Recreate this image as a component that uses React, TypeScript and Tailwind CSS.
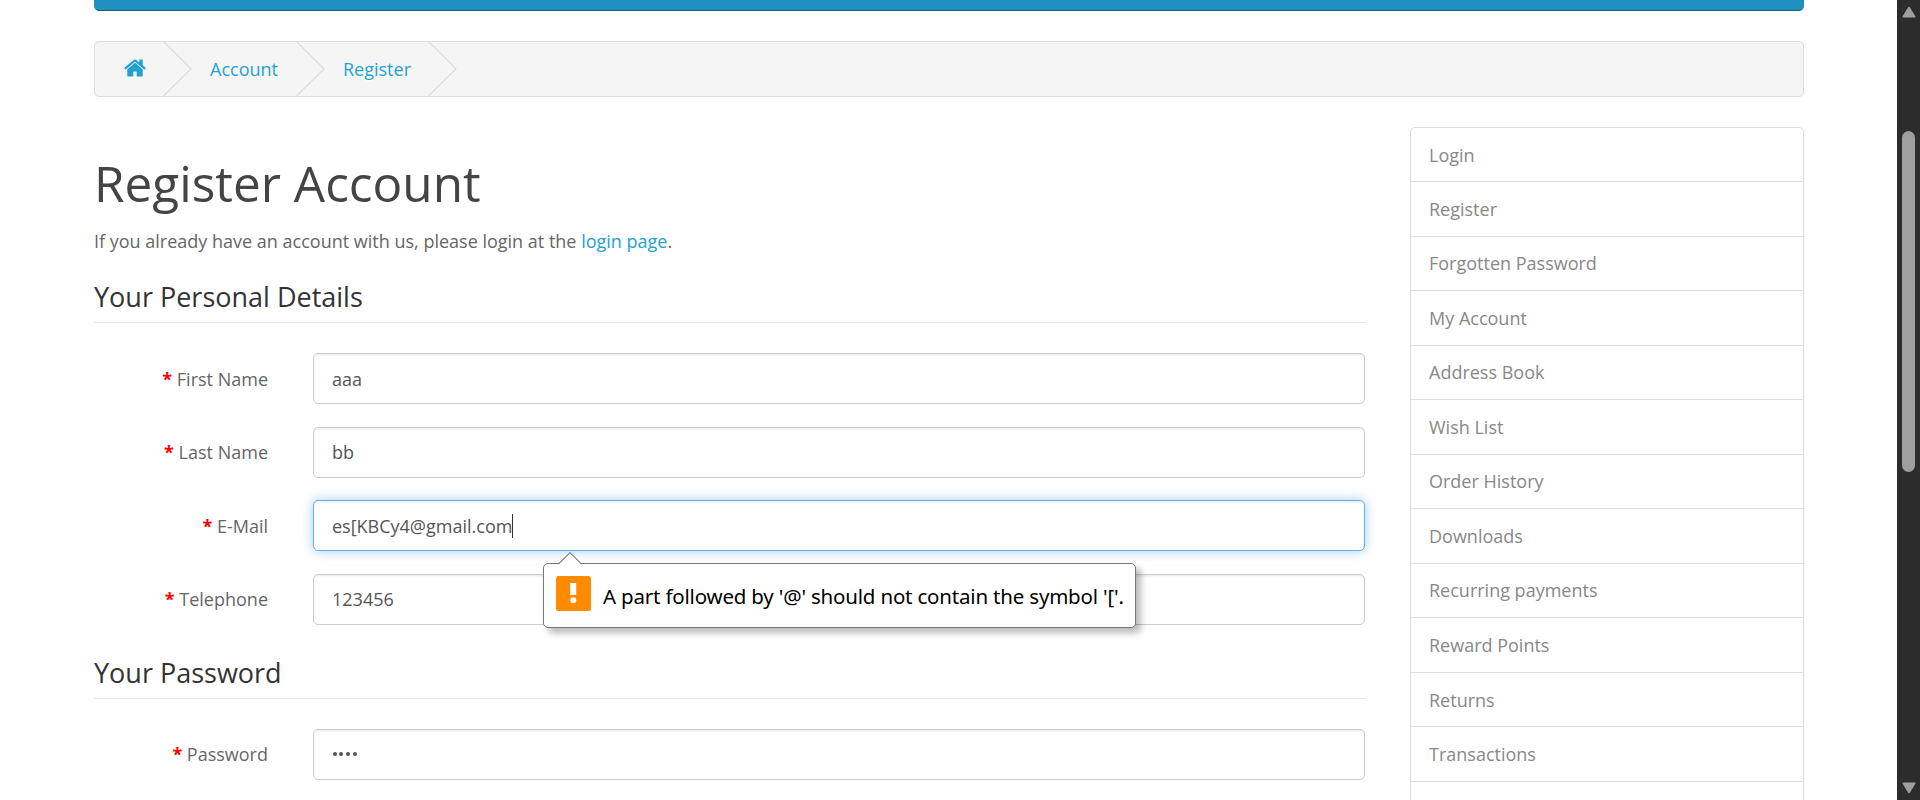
import React from "react";

const links = [
  "Login",
  "Register",
  "Forgotten Password",
  "My Account",
  "Address Book",
  "Wish List",
  "Order History",
  "Downloads",
  "Recurring payments",
  "Reward Points",
  "Returns",
  "Transactions",
];

function Chevron() {
  return (
    <svg className="block h-[56px] w-[29px] shrink-0" viewBox="0 0 29 56" fill="none" stroke="#dddddd" strokeWidth="1.3">
      <path d="M0.5 0.5L28 27.8L0.5 55" />
    </svg>
  );
}

function HomeIcon() {
  return (
    <svg className="block h-6 w-6" viewBox="0 0 1792 1792" fill="#23a1d1">
      <path d="M1472 992v480q0 26-19 45t-45 19h-384v-384h-256v384h-384q-26 0-45-19t-19-45v-480q0-1 .5-3t.5-3l575-474 575 474q1 2 1 6zm223-69l-62 74q-8 9-21 11h-3q-13 0-21-7l-692-577-692 577q-12 8-24 7-13-2-21-11l-62-74q-8-10-7-23.5t11-21.5l719-599q32-26 76-26t76 26l244 204v-195q0-14 9-23t23-9h192q14 0 23 9t9 23v408l219 182q10 8 11 21.5t-7 23.5z" />
    </svg>
  );
}

type FieldProps = {
  label: string;
  focused?: boolean;
  children: React.ReactNode;
};

function Field({ label, focused, children }: FieldProps) {
  return (
    <div className="flex h-[51px] items-center">
      <div className="w-[174px] shrink-0 text-right">
        <span className="font-bold text-[#ff0000]">* </span>
        {label}
      </div>
      <div
        className={
          focused
            ? "ml-[45px] flex h-[51px] flex-1 items-center rounded-[5px] border border-[#66afe9] bg-white px-[18px] text-[#555555] shadow-[inset_0_1.5px_1.5px_rgba(0,0,0,0.075),0_0_12px_rgba(102,175,233,0.6)]"
            : "ml-[45px] flex h-[51px] flex-1 items-center rounded-[5px] border border-[#cccccc] bg-white px-[18px] text-[#555555] shadow-[inset_0_1.5px_1.5px_rgba(0,0,0,0.075)]"
        }
      >
        {children}
      </div>
    </div>
  );
}

function Legend({ children }: { children: React.ReactNode }) {
  return (
    <h2 className="flex h-[52px] items-center border-b border-[#e5e5e5] text-[27px] leading-[51px] text-[#333333]">{children}</h2>
  );
}

function Tooltip() {
  return (
    <div className="absolute top-[63px] left-[449px] z-10 flex h-[65px] w-[593px] items-center rounded-[5px] border border-[#767676] bg-white pl-3 text-black shadow-[5px_5px_7px_rgba(0,0,0,0.28)]">
      <svg className="absolute -top-[12px] left-[14px] h-[13px] w-[24px]" viewBox="0 0 24 13">
        <path d="M0 13L12 1L24 13Z" fill="#ffffff" />
        <path d="M0.3 12.2L12 0.7L23.7 12.2" fill="none" stroke="#767676" strokeWidth="1.1" />
      </svg>
      <svg className="mb-[4px] h-[35px] w-[35px] shrink-0" viewBox="0 0 35 35">
        <rect width="35" height="35" rx="2.5" fill="#ff8c00" />
        <rect x="14.2" y="7" width="6" height="12" fill="#ffffff" />
        <circle cx="17.3" cy="24.3" r="3" fill="#ffffff" />
      </svg>
      <span className="ml-3 whitespace-nowrap font-['Noto_Sans',sans-serif] text-[20.5px] tracking-[-0.19px]">
        A part followed by '@' should not contain the symbol '['.
      </span>
    </div>
  );
}

export default function App() {
  return (
    <div className="flex h-[800px] w-[1920px] overflow-hidden bg-white font-['Open_Sans',sans-serif] text-[18px] leading-[26px] text-[#666666]">
      <div className="flex-1 pl-[94px]">
        <div className="w-[1710px]">
          <div className="h-[11px] rounded-b-[5px] border-x border-b border-[#1f90bb] border-b-[#145e7a] bg-[#2091bf]" />

          <nav className="mt-[30px] flex h-[56px] items-center overflow-hidden rounded-[5px] border border-[#dddddd] bg-[#f5f5f5] text-[#23a1d1] [text-shadow:0_1px_0_#fff]">
            <div className="mb-[3px] ml-[28px] w-[40px]">
              <HomeIcon />
            </div>
            <Chevron />
            <a className="ml-[18px] w-[86px]">Account</a>
            <Chevron />
            <a className="ml-[18px] w-[85px]">Register</a>
            <Chevron />
          </nav>

          <div className="mt-[30px] flex h-[700px]">
            <main className="w-[1271px] shrink-0">
              <h1 className="mt-[27px] h-[60px] text-[49.5px] leading-[59px] text-[#444444]">Register Account</h1>
              <p className="mt-[14px]">
                If you already have an account with us, please login at the <a className="text-[#23a1d1]">login page</a>.
              </p>
              <div className="mt-[17px]">
                <Legend>Your Personal Details</Legend>
              </div>
              <div className="mt-[30px] flex flex-col gap-[22.6px]">
                <Field label="First Name">aaa</Field>
                <Field label="Last Name">bb</Field>
                <div className="relative">
                  <Field label="E-Mail" focused>
                    es[KBCy4@gmail.com
                    <span className="h-6 w-px bg-[#333333]" />
                  </Field>
                  <Tooltip />
                </div>
                <Field label="Telephone">123456</Field>
              </div>
              <div className="mt-[22px]">
                <Legend>Your Password</Legend>
              </div>
              <div className="mt-[30.2px]">
                <Field label="Password">
                  <span className="flex gap-[2.7px] pl-[0.7px]">
                    <i className="h-1 w-1 rounded-full bg-[#555555]" />
                    <i className="h-1 w-1 rounded-full bg-[#555555]" />
                    <i className="h-1 w-1 rounded-full bg-[#555555]" />
                    <i className="h-1 w-1 rounded-full bg-[#555555]" />
                  </span>
                </Field>
              </div>
            </main>

            <aside className="ml-[45px] w-[394px] shrink-0 rounded-[5px] border border-[#dddddd]">
              {links.map((link) => (
                <a
                  key={link}
                  className="flex h-[54.54px] items-center border-b border-[#dddddd] pl-[18px] text-[#888888] first:h-[54px]"
                >
                  {link}
                </a>
              ))}
            </aside>
          </div>
        </div>
      </div>

      <div className="flex h-[800px] w-[23px] shrink-0 flex-col items-center bg-[#2c2c2c]">
        <svg className="mt-[6px] h-3 w-[14px]" viewBox="0 0 14 12">
          <path d="M7 1.5L12.7 10.7H1.3Z" fill="#9f9f9f" stroke="#9f9f9f" strokeWidth="1.6" strokeLinejoin="round" />
        </svg>
        <div className="mt-[113px] h-[341px] w-[13px] rounded-full bg-[#9f9f9f]" />
        <svg className="mt-auto mb-[6px] h-3 w-[14px]" viewBox="0 0 14 12">
          <path d="M7 10.5L12.7 1.3H1.3Z" fill="#9f9f9f" stroke="#9f9f9f" strokeWidth="1.6" strokeLinejoin="round" />
        </svg>
      </div>
    </div>
  );
}
